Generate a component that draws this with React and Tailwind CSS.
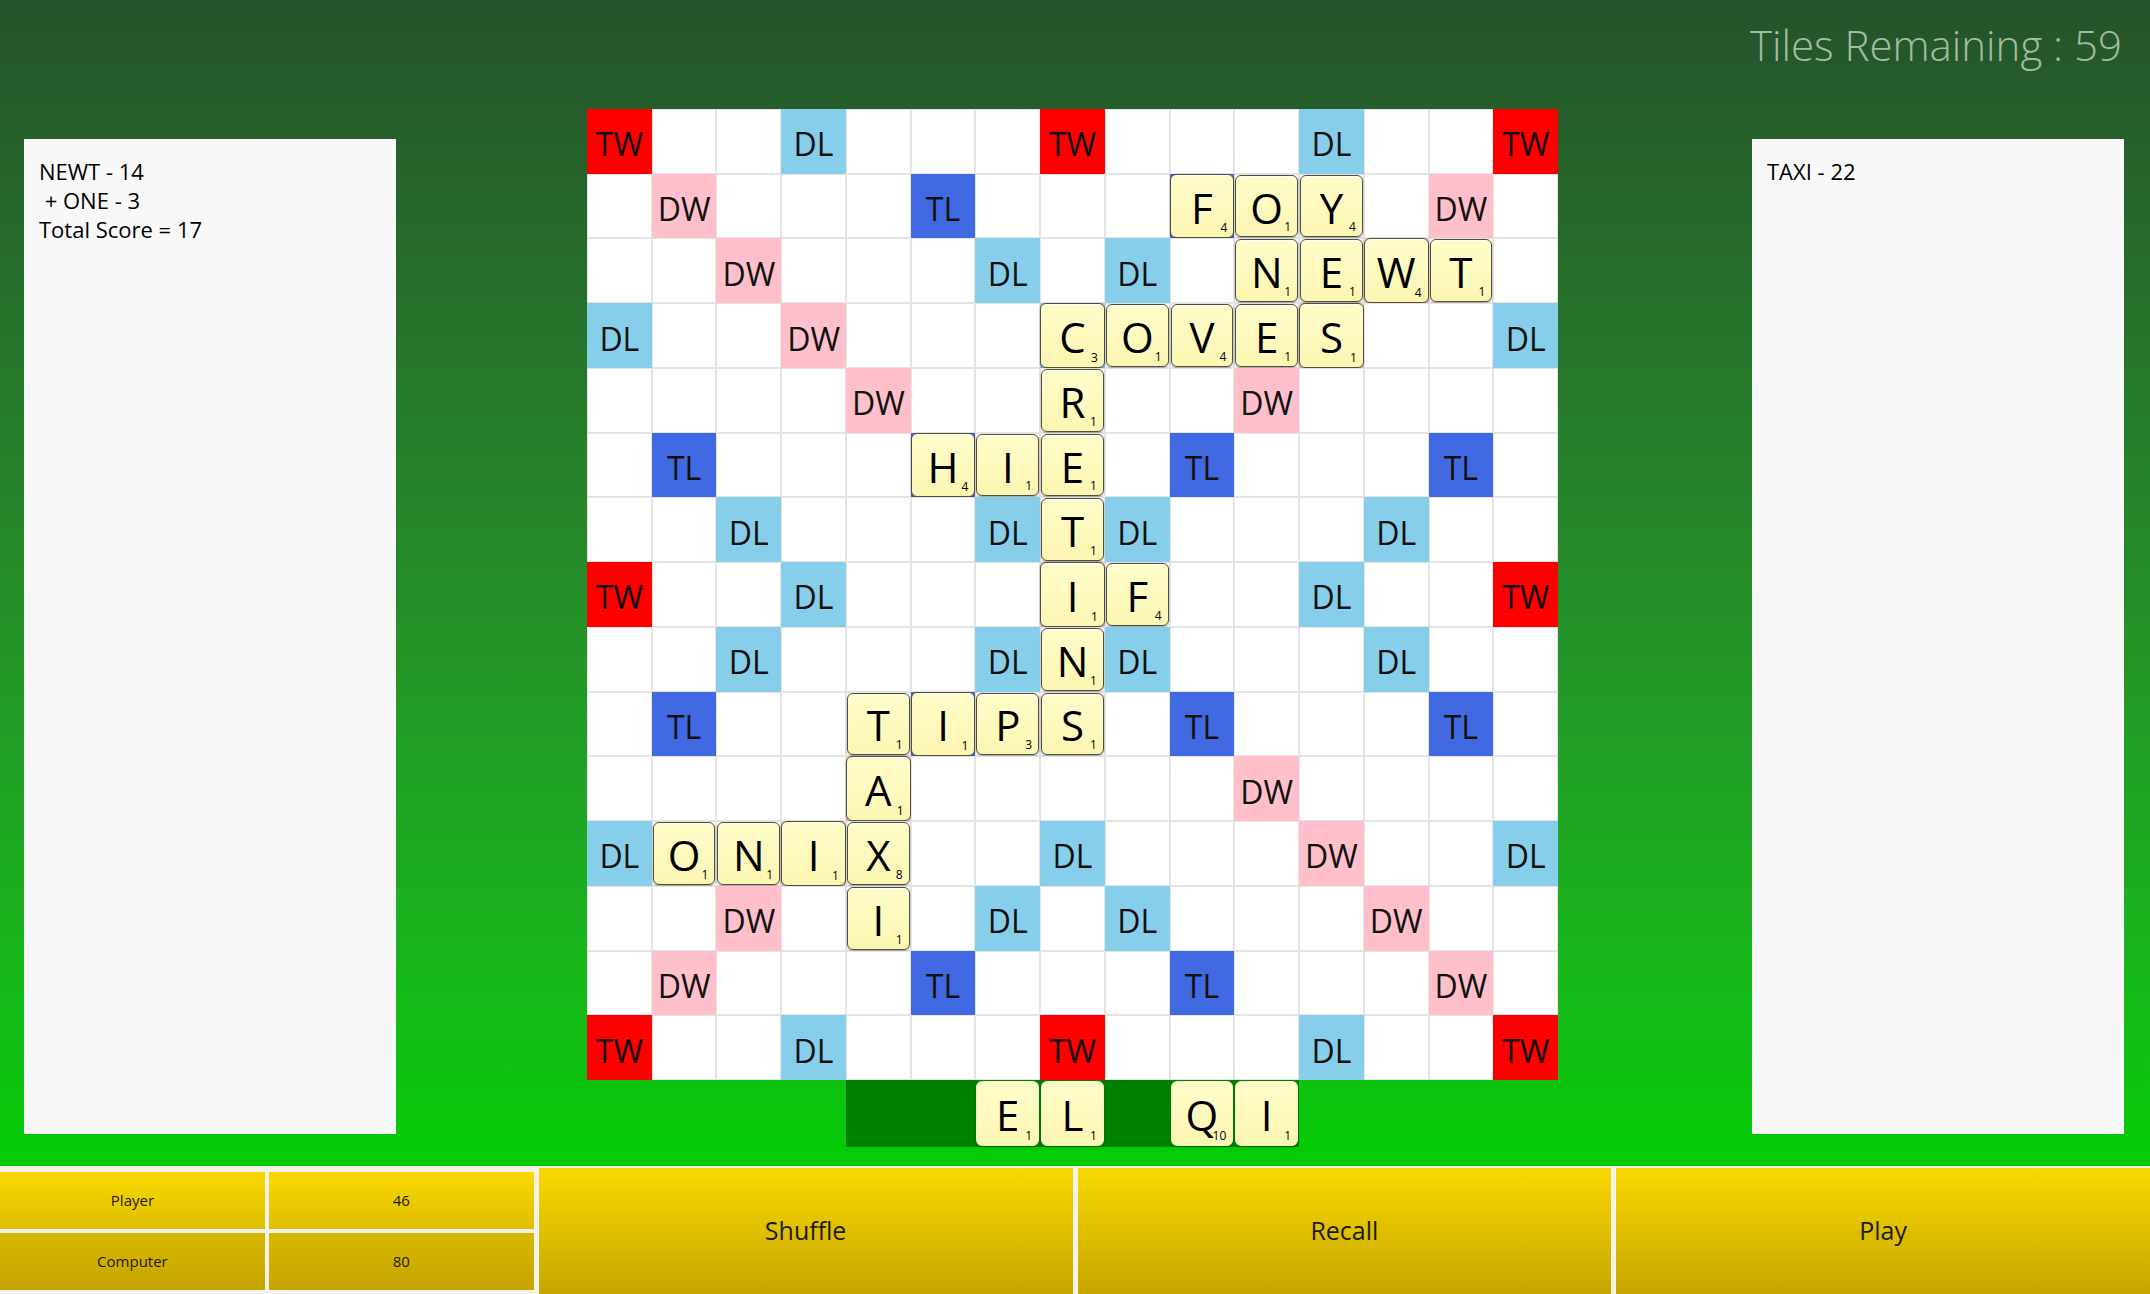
import React from "react";

// board layout: T = triple word, D = double word, t = triple letter, d = double letter
const topHalf = [
  "T..d...T...d..T",
  ".D...t...t...D.",
  "..D...d.d...D..",
  "d..D...d...D..d",
  "....D.....D....",
  ".t...t...t...t.",
  "..d...d.d...d..",
  "T..d...D...d..T",
];
const layout = [...topHalf, ...topHalf.slice(0, 7).reverse()];

const premium = {
  T: { label: "TW", bg: "bg-[#ff0000]" },
  D: { label: "DW", bg: "bg-[#ffc0cb]" },
  t: { label: "TL", bg: "bg-[#4169e1]" },
  d: { label: "DL", bg: "bg-[#87ceeb]" },
};

// tiles placed on the board, "row,col": [letter, value]
const placed = {
  "1,9": ["F", 4],
  "1,10": ["O", 1],
  "1,11": ["Y", 4],
  "2,10": ["N", 1],
  "2,11": ["E", 1],
  "2,12": ["W", 4],
  "2,13": ["T", 1],
  "3,7": ["C", 3],
  "3,8": ["O", 1],
  "3,9": ["V", 4],
  "3,10": ["E", 1],
  "3,11": ["S", 1],
  "4,7": ["R", 1],
  "5,5": ["H", 4],
  "5,6": ["I", 1],
  "5,7": ["E", 1],
  "6,7": ["T", 1],
  "7,7": ["I", 1],
  "7,8": ["F", 4],
  "8,7": ["N", 1],
  "9,4": ["T", 1],
  "9,5": ["I", 1],
  "9,6": ["P", 3],
  "9,7": ["S", 1],
  "10,4": ["A", 1],
  "11,1": ["O", 1],
  "11,2": ["N", 1],
  "11,3": ["I", 1],
  "11,4": ["X", 8],
  "12,4": ["I", 1],
};

const rack = [null, null, ["E", 1], ["L", 1], null, ["Q", 10], ["I", 1]];

const Tile = ({ letter, value, onRack }) => (
  <div
    className={`relative w-full h-full rounded-[6px] border flex items-center justify-center pt-[3px] bg-linear-to-b from-[#fffcca] to-[#fcf6b2] ${
      onRack
        ? "border-[#f6f0c4] shadow-[0_1px_2px_rgba(0,0,0,0.25)]"
        : "border-[#4f4f3c] shadow-[inset_0_1px_1px_rgba(255,255,255,0.9),0_1px_2px_rgba(0,0,0,0.35)]"
    }`}
  >
    <span className="text-[42px] leading-none text-black">{letter}</span>
    <span className="absolute right-[6px] bottom-[3px] text-[12px] leading-none text-black">
      {value}
    </span>
  </div>
);

const Cell = ({ code, tile }) => {
  const p = premium[code];
  const base = p ? p.bg : "bg-white border border-[#e4e4e4]";
  return (
    <div className={`relative ${base} ${tile ? "" : "flex items-center justify-center pt-[6px]"}`}>
      {tile ? (
        <Tile letter={tile[0]} value={tile[1]} />
      ) : (
        p && <span className="text-[32px] leading-none text-[#111]">{p.label}</span>
      )}
    </div>
  );
};

const ScorePanel = ({ lines }) => (
  <div className="w-[372px] h-[995px] bg-[#f8f8f8] pl-[15px] pt-[18px] text-[22px] leading-[29px] text-black whitespace-pre">
    {lines.map((l, i) => (
      <div key={i}>{l}</div>
    ))}
  </div>
);

const yellow = "bg-linear-to-b from-[#fad900] to-[#c6a600]";

export default function App() {
  return (
    <div className="w-[2150px] h-[1294px] overflow-hidden flex flex-col font-['Open_Sans',sans-serif]">
      <main className="h-[1166px] flex bg-linear-to-b from-[#24532a] to-[#02cc02]">
        {/* player words */}
        <div className="w-[587px] pl-[24px] pt-[139px]">
          <ScorePanel lines={["NEWT - 14", " + ONE - 3", "Total Score = 17"]} />
        </div>

        {/* board + rack */}
        <div className="w-[971px] pt-[109px] flex flex-col">
          <div className="w-[971px] h-[971px] grid grid-cols-15 grid-rows-15">
            {layout.map((row, r) =>
              row.split("").map((code, c) => (
                <Cell key={`${r}-${c}`} code={code} tile={placed[`${r},${c}`]} />
              ))
            )}
          </div>
          <div className="ml-[259px] w-[453px] h-[67px] grid grid-cols-7 bg-[#008000]">
            {rack.map((t, i) => (
              <div key={i} className="p-px">
                {t && <Tile letter={t[0]} value={t[1]} onRack />}
              </div>
            ))}
          </div>
        </div>

        {/* computer words */}
        <div className="flex-1 flex flex-col items-end pr-[26px]">
          <div className="h-[139px] pt-[24px] pr-[2px] text-[42px] leading-none font-light text-[#a3bca3]">
            Tiles Remaining : 59
          </div>
          <ScorePanel lines={["TAXI - 22"]} />
        </div>
      </main>

      <footer className="h-[128px] grid grid-cols-4 gap-[5px] bg-[#f3f3ea] pt-[2px]">
        <div className="grid grid-cols-2 grid-rows-2 gap-[4px] py-[4px] text-[15px] text-[#1e1a00]">
          <div className="flex items-center justify-center bg-linear-to-b from-[#f9d800] to-[#debe00]">Player</div>
          <div className="flex items-center justify-center bg-linear-to-b from-[#f9d800] to-[#debe00]">46</div>
          <div className="flex items-center justify-center bg-linear-to-b from-[#d8b800] to-[#c6a500]">Computer</div>
          <div className="flex items-center justify-center bg-linear-to-b from-[#d8b800] to-[#c6a500]">80</div>
        </div>
        {["Shuffle", "Recall", "Play"].map((label) => (
          <button
            key={label}
            type="button"
            className={`${yellow} flex items-center justify-center text-[25px] text-[#1e1a00]`}
          >
            {label}
          </button>
        ))}
      </footer>
    </div>
  );
}
